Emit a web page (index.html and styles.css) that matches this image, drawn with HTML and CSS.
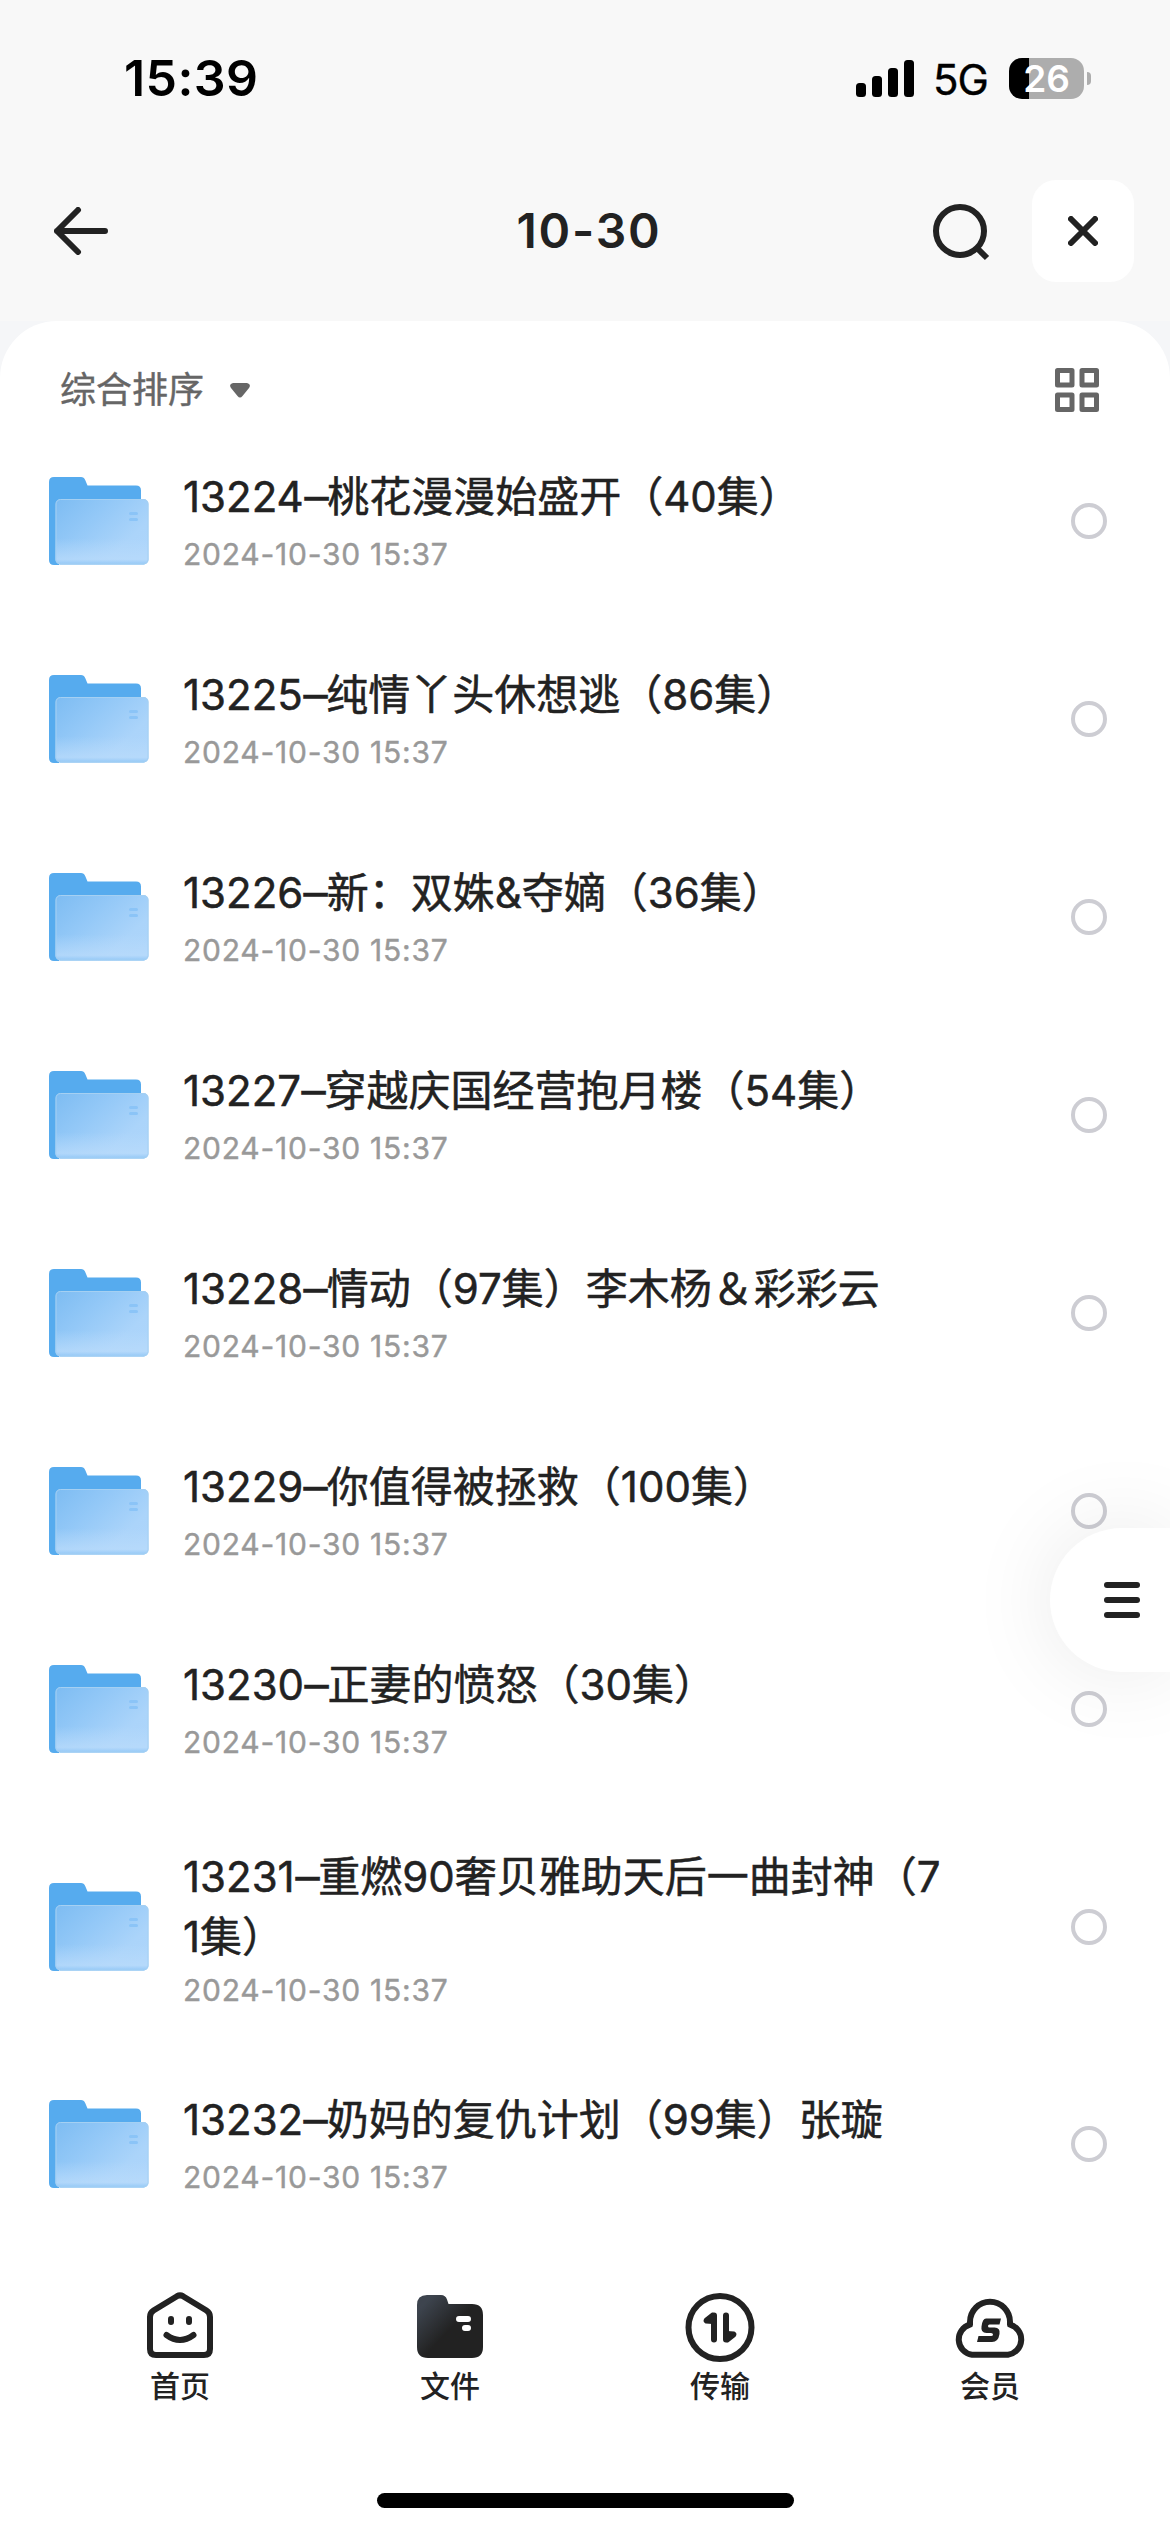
FILE: index.html
```html
<!DOCTYPE html>
<html lang="zh-CN">
<head>
<meta charset="utf-8">
<title>10-30</title>
<link rel="stylesheet" href="styles.css">
</head>
<body>
<svg class="defs" width="0" height="0" aria-hidden="true">
  <defs>
    <linearGradient id="front" x1="0" y1="0" x2="1" y2="0.75">
      <stop offset="0" stop-color="#7dbcf2"/>
      <stop offset="0.4" stop-color="#93c8f7"/>
      <stop offset="0.8" stop-color="#abd4fa"/>
      <stop offset="1" stop-color="#add5fb"/>
    </linearGradient>
    <linearGradient id="sheen" x1="0" y1="0" x2="0" y2="1">
      <stop offset="0.6" stop-color="#b9dbfb" stop-opacity="0"/>
      <stop offset="0.92" stop-color="#b9dbfb" stop-opacity="0.75"/>
      <stop offset="1" stop-color="#8fc6f6"/>
    </linearGradient>
    <linearGradient id="dark" x1="0" y1="0.1" x2="0.55" y2="0.6">
      <stop offset="0.15" stop-color="#3d444e"/>
      <stop offset="0.9" stop-color="#222"/>
    </linearGradient>
  </defs>
  <symbol id="folder" viewBox="0 0 100 88">
    <path fill="#56abee" d="M5 0h27q3 0 4.200 3l2.300 5.500H87q5 0 5 5V50H10v38H5q-5 0-5-5V5q0-5 5-5z"/>
    <rect x="6.500" y="22" width="93" height="65.500" rx="5" fill="url(#front)"/>
    <rect x="6.500" y="22" width="93" height="65.500" rx="5" fill="url(#sheen)"/>
    <rect x="7" y="22.500" width="92" height="64.500" rx="4.500" fill="none" stroke="#a5d0f2" stroke-width="1"/>
    <path stroke="#8bc4f7" stroke-width="3" stroke-linecap="round" d="M81.500 36.500h6M81.500 42.500h6"/>
  </symbol>
</svg>
<div class="screen">
  <header class="top">
    <div class="status">
      <span class="clock">15:39</span>
      <div class="status-right">
        <svg class="signal" viewBox="0 0 58 37"><rect y="23" width="10" height="14" rx="3.500"/><rect x="16" y="16" width="10" height="21" rx="3.500"/><rect x="32" y="8" width="10" height="29" rx="3.500"/><rect x="48" width="10" height="37" rx="3.500"/></svg>
        <span class="network">5G</span>
        <span class="battery">26</span>
        <span class="nub"></span>
      </div>
    </div>
    <nav class="titlebar">
      <svg class="back" viewBox="0 0 54 48"><path d="M51 24H3M24 3L3 24l21 21"/></svg>
      <h1>10-30</h1>
      <div class="actions">
        <svg class="search" viewBox="0 0 60 60"><circle cx="29" cy="30" r="24"/><path d="M45 46l11 11"/></svg>
        <span class="close"><svg viewBox="0 0 30 30"><path d="M3 3l24 24M27 3L3 27"/></svg></span>
      </div>
    </nav>
  </header>
  <div class="sheet-wrap"><main class="sheet">
    <div class="sortbar">
      <span class="sort">综合排序</span>
      <svg class="caret" viewBox="0 0 20 15"><path d="M3 0h14q4.500 1 2 5l-6.500 8q-2.500 3-5 0L1 5q-2.500-4 2-5z"/></svg>
      <svg class="grid" viewBox="0 0 44 44"><rect x="2.500" y="2.500" width="14.500" height="14.500"/><rect x="27" y="2.500" width="14.500" height="14.500"/><rect x="2.500" y="27" width="14.500" height="14.500"/><rect x="27" y="27" width="14.500" height="14.500"/></svg>
    </div>
    <ul class="files">
      <li><svg class="folder"><use href="#folder"/></svg><div class="info"><p class="name">13224<span class="dash">–</span>桃花漫漫始盛开（40集）</p><p class="date">2024-10-30 15:37</p></div><span class="radio"></span></li>
      <li><svg class="folder"><use href="#folder"/></svg><div class="info"><p class="name">13225<span class="dash">–</span>纯情丫头休想逃（86集）</p><p class="date">2024-10-30 15:37</p></div><span class="radio"></span></li>
      <li><svg class="folder"><use href="#folder"/></svg><div class="info"><p class="name">13226<span class="dash">–</span>新：双姝&amp;夺嫡（36集）</p><p class="date">2024-10-30 15:37</p></div><span class="radio"></span></li>
      <li><svg class="folder"><use href="#folder"/></svg><div class="info"><p class="name">13227<span class="dash">–</span>穿越庆国经营抱月楼（54集）</p><p class="date">2024-10-30 15:37</p></div><span class="radio"></span></li>
      <li><svg class="folder"><use href="#folder"/></svg><div class="info"><p class="name">13228<span class="dash">–</span>情动（97集）李木杨＆彩彩云</p><p class="date">2024-10-30 15:37</p></div><span class="radio"></span></li>
      <li><svg class="folder"><use href="#folder"/></svg><div class="info"><p class="name">13229<span class="dash">–</span>你值得被拯救（100集）</p><p class="date">2024-10-30 15:37</p></div><span class="radio"></span></li>
      <li><svg class="folder"><use href="#folder"/></svg><div class="info"><p class="name">13230<span class="dash">–</span>正妻的愤怒（30集）</p><p class="date">2024-10-30 15:37</p></div><span class="radio"></span></li>
      <li class="tall"><svg class="folder"><use href="#folder"/></svg><div class="info"><p class="name">13231<span class="dash">–</span>重燃90奢贝雅助天后一曲封神（7<br>1集）</p><p class="date">2024-10-30 15:37</p></div><span class="radio"></span></li>
      <li><svg class="folder"><use href="#folder"/></svg><div class="info"><p class="name">13232<span class="dash">–</span>奶妈的复仇计划（99集）张璇</p><p class="date">2024-10-30 15:37</p></div><span class="radio"></span></li>
    </ul>
  </main></div>
  <footer class="tabs">
    <div class="tab">
      <svg viewBox="0 0 72 72"><g fill="none" stroke="#222" stroke-width="6" stroke-linecap="round" stroke-linejoin="round"><path d="M33 4.200q3-1.700 6 0l23.500 14.300q3.500 2.200 3.500 6.500v32q0 6-6 6H12q-6 0-6-6V25q0-4.300 3.500-6.500z"/><path d="M22.500 43q13.500 10 27 0"/><path d="M27 27v3M45 27v3"/></g></svg>
      <span>首页</span>
    </div>
    <div class="tab">
      <svg viewBox="0 0 72 72"><path fill="url(#dark)" d="M13 3h14q4.500 0 6 4.500l1.500 4.500H58q11 0 11 11v32q0 11-11 11H14Q3 66 3 55V13Q3 3 13 3z"/><path stroke="#fff" stroke-width="6" stroke-linecap="round" d="M45 27h9M51 36h3"/></svg>
      <span>文件</span>
    </div>
    <div class="tab">
      <svg viewBox="0 0 72 72"><circle cx="36" cy="35.500" r="31.500" fill="none" stroke="#222" stroke-width="6"/><g fill="#222" stroke="#222" stroke-width="6" stroke-linecap="round" stroke-linejoin="round"><path d="M30 23.500v24M42 23.500v24"/><path stroke-width="3" d="M28.500 22l-7 5.500q-1 1.500.5 2.500l6.500.5zM43.500 49l7-5.500q1-1.500-.5-2.500l-6.500-.5z"/></g></svg>
      <span>传输</span>
    </div>
    <div class="tab">
      <svg viewBox="0 0 72 72"><path fill="none" stroke="#222" stroke-width="6" stroke-linejoin="round" d="M18 62.700a15 15.300 0 0 1-2-30V30a20 20.300 0 0 1 40 0v2.700a15 15.300 0 0 1-2 30z"/><path fill="#222" d="M32 26.500h15l-1.500 6H35.500q-1.500 0-1.500 1.500t1.500 1.500h5q6 0 5 6.500-1.200 8-7.500 8H23l1.500-6h12.500q2 0 2-1.500t-2-1.500h-4.500q-6 0-5-6.500 1-8 4.500-8z"/></svg>
      <span>会员</span>
    </div>
  </footer>
  <div class="home-indicator"></div>
  <div class="drawer"><i></i><i></i><i></i></div>
</div>
</body>
</html>
```
FILE: styles.css
```css
* { box-sizing: border-box; margin: 0; padding: 0; }

body {
  background: #fff;
  font-family: Inter, "Noto Sans CJK SC", sans-serif;
  color: #222;
}

.defs { position: absolute; }

.screen {
  position: relative;
  width: 1170px;
  height: 2532px;
  overflow: hidden;
  display: flex;
  flex-direction: column;
}

.top { height: 321px; background: #f8f8f8; flex: none; }

.status {
  height: 156px;
  padding: 0 79px 0 124px;
  display: flex;
  justify-content: space-between;
  align-items: center;
  color: #000;
}

.clock { font-size: 50px; font-weight: 600; line-height: 60px; letter-spacing: 0.4px; }
.status-right { display: flex; align-items: center; height: 42px; }
.signal { width: 58px; height: 37px; margin-right: 19px; }
.network { width: 58px; font-size: 42px; font-weight: 400; line-height: 42px; letter-spacing: -1px; padding-top: 3px; -webkit-text-stroke: 0.4px; }

.battery {
  width: 75px;
  height: 41px;
  margin-left: 18px;
  border-radius: 13px;
  background: linear-gradient(90deg, #000 20px, #adadad 20px);
  color: #fff;
  font-size: 37px;
  font-weight: 600;
  line-height: 41px;
  text-align: center;
}

.nub { width: 4px; height: 13px; margin-left: 3px; border-radius: 0 4px 4px 0; background: #adadad; }

.titlebar {
  height: 150px;
  padding: 0 36px 0 44px;
  display: grid;
  grid-template-columns: 1fr auto 1fr;
  align-items: center;
}

.titlebar svg { fill: none; stroke: #222; stroke-width: 6; stroke-linecap: round; stroke-linejoin: round; display: block; }
.back { width: 54px; height: 48px; margin-left: 10px; }
.titlebar h1 { font-size: 48px; font-weight: 600; line-height: 60px; letter-spacing: 1.8px; }
.actions { display: flex; justify-content: flex-end; align-items: center; gap: 41px; }
.search { width: 60px; height: 60px; }
.titlebar .search { stroke-linecap: butt; }
.close { width: 102px; height: 102px; border-radius: 24px; background: #fff; display: grid; place-items: center; }
.close svg { width: 30px; height: 30px; }

.sheet-wrap { background: linear-gradient(#f5f6f8 60px, #fff 60px); flex: none; }
.sheet { background: #fff; border-radius: 57px 57px 0 0; height: 1922px; }

.sortbar { height: 101px; padding: 37px 71px 0 60px; display: flex; align-items: center; color: #666; }
.sort { font-size: 36px; font-weight: 400; line-height: 64px; -webkit-text-stroke: 0.4px; }
.caret { width: 20px; height: 15px; margin-left: 26px; fill: #666; }
.grid { width: 44px; height: 44px; margin-left: auto; fill: none; stroke: #666; stroke-width: 5; stroke-linejoin: round; }

.files { list-style: none; }
.files li { height: 198px; padding: 0 63px 0 49px; display: flex; align-items: center; }
.files .tall { height: 237px; }
.folder { width: 100px; height: 88px; flex: none; }
.info { flex: 1; padding: 2px 0 0 34px; display: flex; flex-direction: column; gap: 4px; }
.tall .info { padding-top: 6px; gap: 0; }
.name { font-size: 42px; font-weight: 400; line-height: 60px; white-space: nowrap; -webkit-text-stroke: 0.5px; }
.dash { display: inline-block; margin: 0 0.5px 0 2px; transform: scaleX(1.15); }
.date { font-size: 30px; font-weight: 400; line-height: 46px; letter-spacing: 0.76px; color: #999; -webkit-text-stroke: 0.4px; }
.radio { width: 36px; height: 36px; border: 4px solid #cdcdd3; border-radius: 50%; flex: none; }

.tabs { height: 200px; padding: 49px 45px 0; display: flex; flex: none; }
.tab { width: 270px; display: flex; flex-direction: column; align-items: center; }
.tab svg { width: 72px; height: 72px; }
.tab span { font-size: 30px; font-weight: 500; line-height: 44px; }

.home-indicator { width: 417px; height: 15px; margin: 50px auto 0; border-radius: 8px; background: #000; flex: none; }

.drawer {
  position: absolute;
  right: 0;
  top: 1528px;
  width: 120px;
  height: 144px;
  padding: 0 30px 0 54px;
  border-radius: 72px 0 0 72px;
  background: #fff;
  box-shadow: 0 0 90px rgba(0, 0, 0, 0.09);
  display: flex;
  flex-direction: column;
  justify-content: center;
  gap: 9px;
}

.drawer i { height: 6px; border-radius: 3px; background: #222; }
```
